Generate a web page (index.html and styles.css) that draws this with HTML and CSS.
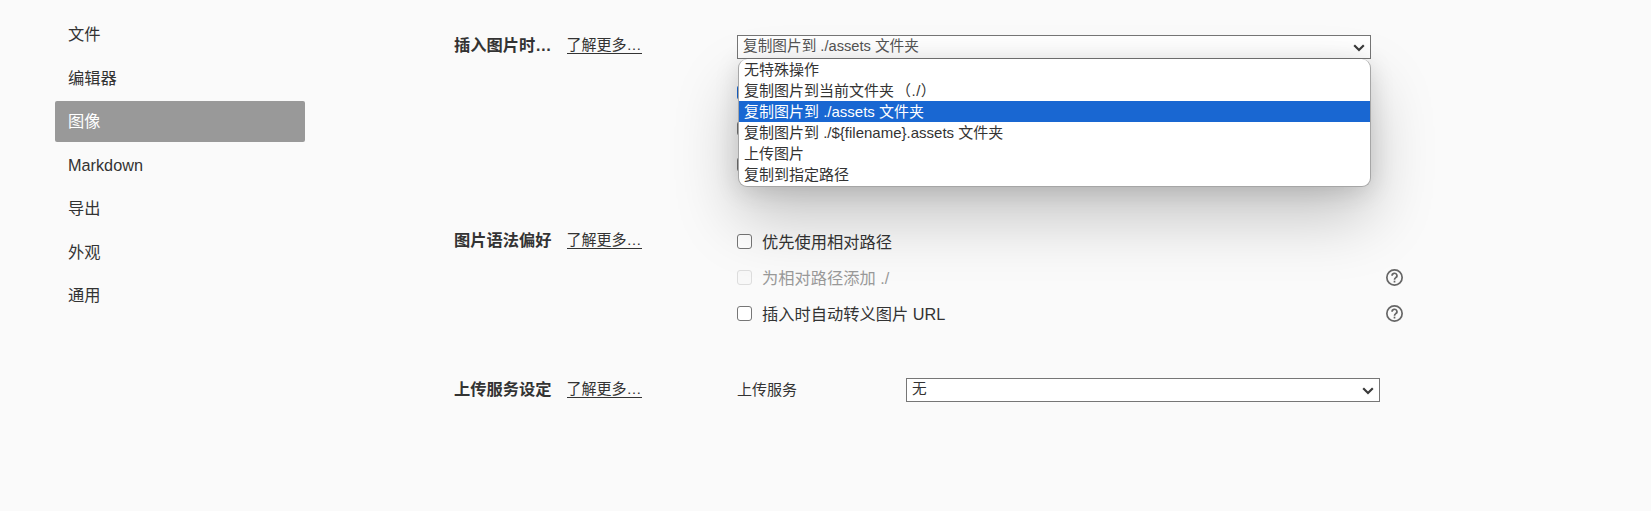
FILE: index.html
```html
<!DOCTYPE html>
<html lang="zh-CN">
<head>
<meta charset="utf-8">
<title>偏好设置</title>
<link rel="stylesheet" href="styles.css">
</head>
<body>
<div class="page">
  <nav class="sidebar">
    <a class="nav-item">文件</a>
    <a class="nav-item">编辑器</a>
    <a class="nav-item active">图像</a>
    <a class="nav-item">Markdown</a>
    <a class="nav-item">导出</a>
    <a class="nav-item">外观</a>
    <a class="nav-item">通用</a>
  </nav>
  <main class="content">
    <section class="group insert">
      <div class="heading"><h2>插入图片时…</h2><a class="more">了解更多…</a></div>
      <div class="controls">
        <div class="select-wrap">
          <div class="select"><span>复制图片到 ./assets 文件夹</span><svg class="chevron" viewBox="0 0 12 8"><path d="M1.200 1.300 6 6l4.800-4.700"/></svg></div>
          <ul class="menu">
            <li>无特殊操作</li>
            <li>复制图片到当前文件夹<span class="path">（./）</span></li>
            <li class="selected">复制图片到 ./assets 文件夹</li>
            <li>复制图片到 ./${filename}.assets 文件夹</li>
            <li>上传图片</li>
            <li>复制到指定路径</li>
          </ul>
        </div>
        <div class="checks">
          <div class="check"><i class="box checked"></i></div>
          <div class="check"><i class="box"></i></div>
          <div class="check"><i class="box"></i></div>
        </div>
      </div>
    </section>
    <section class="group syntax">
      <div class="heading"><h2>图片语法偏好</h2><a class="more">了解更多…</a></div>
      <div class="checks">
        <div class="check"><i class="box"></i><span>优先使用相对路径</span></div>
        <div class="check disabled"><i class="box"></i><span>为相对路径添加 ./</span>
          <svg class="help" viewBox="0 0 16 16"><circle cx="8" cy="8" r="7.200"/><path d="M5.700 6.300a2.300 2.200 0 1 1 3.500 1.800C8.300 8.700 8 9 8 10"/><path d="M8 11v1.700"/></svg></div>
        <div class="check"><i class="box"></i><span>插入时自动转义图片 URL</span>
          <svg class="help" viewBox="0 0 16 16"><circle cx="8" cy="8" r="7.200"/><path d="M5.700 6.300a2.300 2.200 0 1 1 3.500 1.800C8.300 8.700 8 9 8 10"/><path d="M8 11v1.700"/></svg></div>
      </div>
    </section>
    <section class="group upload">
      <div class="heading"><h2>上传服务设定</h2><a class="more">了解更多…</a></div>
      <div class="service">
        <label class="service-label">上传服务</label>
        <div class="select"><span>无</span><svg class="chevron" viewBox="0 0 12 8"><path d="M1.200 1.300 6 6l4.800-4.700"/></svg></div>
      </div>
    </section>
  </main>
</div>
</body>
</html>
```
FILE: styles.css
```css
* { box-sizing: border-box; }
body {
  margin: 0;
  background: #fafafa;
  color: #333;
  font: 16.25px/24px "Liberation Sans", "Noto Sans CJK SC", sans-serif;
}
.page { display: flex; height: 511px; overflow: hidden; }
.sidebar {
  display: flex;
  flex-direction: column;
  gap: 2.500px;
  width: 250px;
  margin: 14px 0 0 55px;
}
.nav-item {
  height: 41px;
  padding-left: 13px;
  line-height: 40px;
  border-radius: 2px;
}
.active { background: #999; color: #fff; }
.content { width: 950px; margin-left: 149px; padding-top: 35px; }
.group { display: grid; grid-template-columns: 283px 1fr; align-items: start; }
.insert { height: 188px; }
.syntax { height: 155px; }
.heading { display: flex; gap: 15px; align-items: center; height: 24px; }
.insert .heading { margin-top: -2px; }
.syntax .heading { margin-top: 5px; }
.upload .heading { margin-top: -1px; }
.heading h2 {
  width: 97.500px;
  margin: 0;
  font-size: 16.25px;
  line-height: 24px;
  font-weight: bold;
  white-space: nowrap;
}
.more {
  height: 17px;
  font-size: 15px;
  line-height: 16px;
  border-bottom: 1px solid #333;
}
.select-wrap { position: relative; width: 634px; }
.select {
  display: flex;
  justify-content: space-between;
  align-items: center;
  height: 24px;
  padding: 0 5px;
  border: 1px solid #767676;
  background: #fff;
  font-size: 14.67px;
  line-height: 20px;
}
.select span { margin-top: -2px; }
.insert .select { color: #555; }
.chevron { width: 12px; height: 8px; margin-top: 2px; fill: none; stroke: #3b3b3b; stroke-width: 2.200; }
.menu {
  position: absolute;
  z-index: 1;
  top: 24px;
  left: 1px;
  width: 633px;
  height: 128px;
  margin: 0;
  padding: 0;
  list-style: none;
  overflow: hidden;
  background: #fff;
  border: solid #a6a6a6;
  border-width: 0 1px 1px;
  border-radius: 9px;
  box-shadow: 0 30px 64px rgba(0, 0, 0, .22), 0 4px 24px rgba(0, 0, 0, .13);
  font-size: 15px;
}
.menu li { height: 21px; padding-left: 5px; line-height: 21px; }
.path { margin-left: 2px; letter-spacing: .5px; }
.selected { background: #1967d2; color: #fff; }
.insert .checks { margin-top: 15px; }
.check { display: flex; align-items: center; height: 36px; }
.check span { padding-top: 2px; }
.box {
  width: 15px;
  height: 15px;
  margin-right: 10px;
  border: 1px solid #767676;
  border-radius: 3px;
  background: #fff;
}
.checked { background: #1967d2; border-color: #1967d2; }
.disabled { color: #999; }
.disabled .box { border-color: #ddd; background: #f8f8f8; }
.help { width: 17px; height: 17px; margin-left: auto; fill: none; stroke: #666; stroke-width: 1.600; }
.syntax .checks { width: 666px; }
.service { display: flex; align-items: center; width: 643px; }
.service-label { width: 169px; font-size: 15px; }
.service .select { flex: 1; }
```
